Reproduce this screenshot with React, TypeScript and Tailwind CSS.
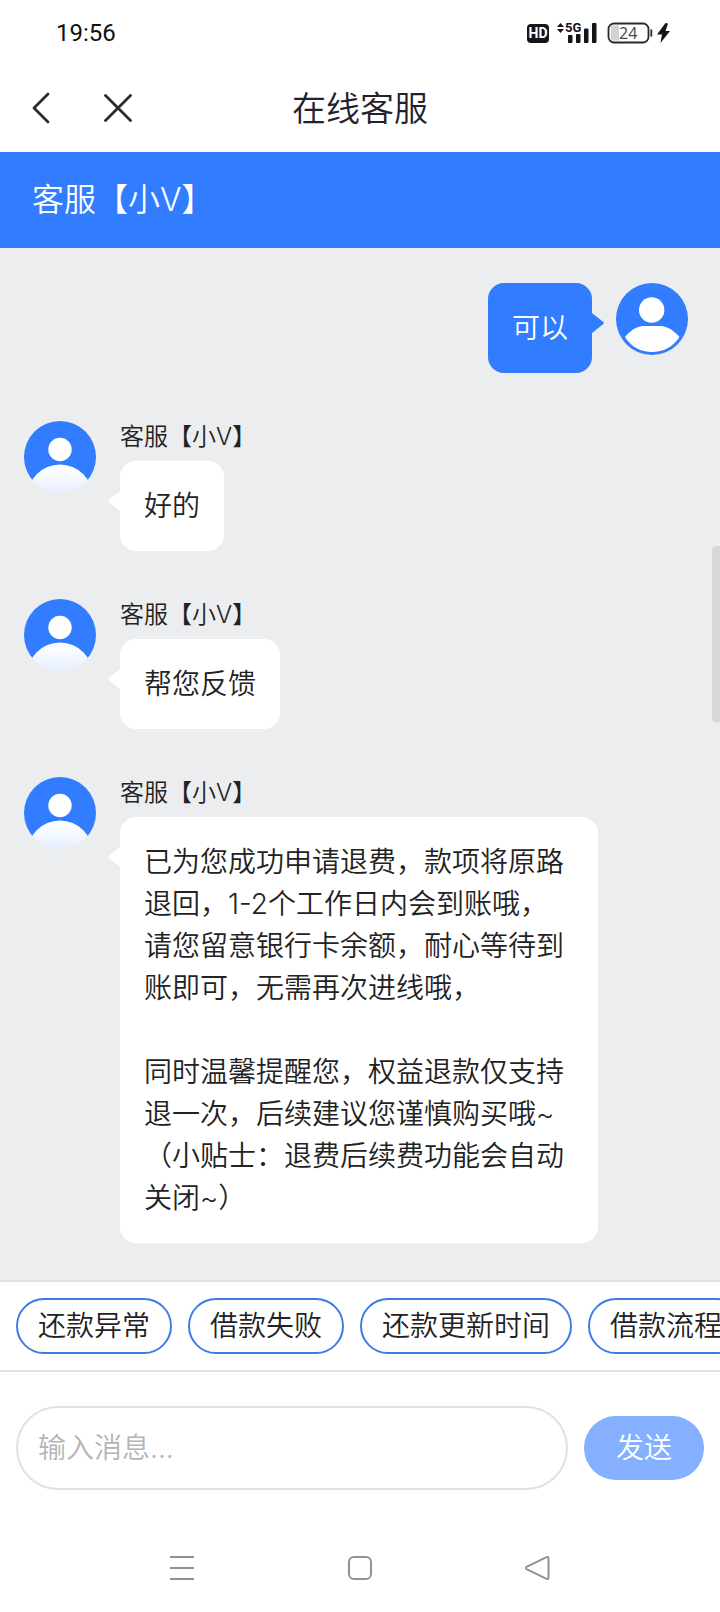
import { useState, type ReactNode } from 'react';

const AGENT = '客服【小V】';

const messages = [
  { id: 1, from: 'user', text: '可以' },
  { id: 2, from: 'agent', text: '好的' },
  { id: 3, from: 'agent', text: '帮您反馈' },
  {
    id: 4,
    from: 'agent',
    text:
      '已为您成功申请退费，款项将原路退回，1-2个工作日内会到账哦，\n请您留意银行卡余额，耐心等待到账即可，无需再次进线哦，\n\n' +
      '同时温馨提醒您，权益退款仅支持退一次，后续建议您谨慎购买哦~\n（小贴士：退费后续费功能会自动关闭~）',
  },
];

const quickReplies = ['还款异常', '借款失败', '还款更新时间', '借款流程'];

export default function App() {
  const [draft, setDraft] = useState('');

  return (
    <div className="flex min-h-screen flex-col overflow-x-hidden bg-white font-[Inter,'Noto_Sans_CJK_SC',sans-serif] [font-weight:350] text-[#222]">
      <StatusBar />

      {/* 标题栏 */}
      <header className="grid h-22 grid-cols-3 items-center px-8">
        <div className="flex items-center gap-[54px]">
          <button type="button" aria-label="返回">
            <svg width="18" height="32" viewBox="0 0 18 32" fill="none" stroke="#2b2b2e" strokeWidth="2.8" strokeLinecap="round" strokeLinejoin="round">
              <path d="M16 2 2 16l14 14" />
            </svg>
          </button>
          <button type="button" aria-label="关闭">
            <svg width="28" height="28" viewBox="0 0 28 28" fill="none" stroke="#2b2b2e" strokeWidth="2.8" strokeLinecap="round">
              <path d="M1.5 1.5l25 25M26.5 1.5l-25 25" />
            </svg>
          </button>
        </div>
        <h1 className="pt-0.5 text-center text-[34px] leading-12 text-[#23222c]">在线客服</h1>
      </header>

      <div className="bg-[#327dff] px-8 py-6 text-[32px] leading-12 text-white">{AGENT}</div>

      {/* 聊天记录 */}
      <main className="relative flex flex-1 flex-col gap-12 bg-[#ebedef] pt-[35px] pr-8 pb-[37px] pl-6">
        {messages.map((m) =>
          m.from === 'user' ? (
            <div key={m.id} className="flex items-start justify-end gap-6">
              <Bubble side="right">{m.text}</Bubble>
              <UserAvatar />
            </div>
          ) : (
            <div key={m.id} className="flex items-start gap-6">
              <AgentAvatar />
              <div className="flex flex-col items-start gap-2">
                <p className="text-2xl leading-8">{AGENT}</p>
                <Bubble side="left">{m.text}</Bubble>
              </div>
            </div>
          ),
        )}
        <div className="absolute top-[298px] right-0 h-44 w-2 rounded-l bg-[#d5d7d9]" />
      </main>

      {/* 快捷问题 */}
      <div className="flex gap-4 overflow-hidden border-y-2 border-[#e2e3e4] px-4 py-4">
        {quickReplies.map((q) => (
          <button
            key={q}
            type="button"
            onClick={() => setDraft(q)}
            className="h-14 shrink-0 rounded-full border-2 border-[#3b7de8] px-5 text-[28px] leading-10 whitespace-nowrap"
          >
            {q}
          </button>
        ))}
      </div>

      {/* 输入区 */}
      <form className="flex items-center gap-4 px-4 py-[34px]" onSubmit={(e) => e.preventDefault()}>
        <input
          type="text"
          aria-label="输入消息"
          placeholder="输入消息..."
          value={draft}
          onChange={(e) => setDraft(e.target.value)}
          className="h-[84px] min-w-0 flex-1 rounded-full border-2 border-[#e2e2e2] px-5 text-[28px] outline-none placeholder:text-[#b4b4b4]"
        />
        <button type="submit" className="h-16 w-30 rounded-full bg-[#84b0ff] text-[28px] leading-10 text-white">
          发送
        </button>
      </form>

      {/* 系统导航键 */}
      <nav className="flex h-22 items-center justify-center gap-[152px]">
        <button type="button" aria-label="最近任务">
          <svg width="26" height="26" viewBox="0 0 26 26" stroke="#929292" strokeWidth="2">
            <path d="M1 2h24M1 13h24M1 24h24" />
          </svg>
        </button>
        <button type="button" aria-label="主屏幕">
          <svg width="26" height="26" viewBox="0 0 26 26" fill="none" stroke="#929292" strokeWidth="2">
            <rect x="2" y="2" width="22" height="22" rx="5" />
          </svg>
        </button>
        <button type="button" aria-label="后退">
          <svg width="26" height="26" viewBox="0 0 26 26" fill="none" stroke="#929292" strokeWidth="2" strokeLinejoin="round">
            <path d="M2 11.6 21.6 2.2q1.9-.7 1.9 1.3v19q0 2-1.9 1.3L2 14.4q-2-1.4 0-2.8Z" />
          </svg>
        </button>
      </nav>
    </div>
  );
}

function StatusBar() {
  return (
    <div className="flex h-16 items-center justify-between pt-0.5 pr-12 pl-14">
      <span className="font-[Roboto,sans-serif] text-2xl leading-8 font-normal text-[#111]">19:56</span>
      <div className="flex items-center gap-2 pr-0.5">
        <span className="flex h-[19px] w-[22px] items-center justify-center rounded-sm bg-[#151515] font-[Roboto,sans-serif] text-sm leading-4 font-bold text-white">
          HD
        </span>
        <div className="relative pr-0.5">
          <svg width="40" height="22" viewBox="0 0 40 22" fill="#151515">
            <path d="M0 5 3.5 1 7 5zM0 7l3.5 4L7 7z" />
            <rect x="11" y="13" width="4.5" height="8" rx="1" />
            <rect x="19" y="12" width="4.5" height="9" rx="1" />
            <rect x="27" y="6.5" width="4.5" height="14.5" rx="1" />
            <rect x="35" y="1" width="4.5" height="20" rx="1" />
          </svg>
          <span className="absolute top-0 left-2 font-[Roboto,sans-serif] text-[13px] leading-3 font-bold text-[#151515]">5G</span>
        </div>
        <div className="flex items-center gap-1">
          <div className="relative flex items-center">
            <svg width="46" height="22" viewBox="0 0 46 22" fill="none">
              <rect x="4" y="3.5" width="8" height="15" fill="#d3d3d3" />
              <rect x="1.5" y="1.5" width="40" height="19" rx="5.5" stroke="#2a2a2a" strokeWidth="1.8" />
              <path d="M44.3 7.5v7" stroke="#2a2a2a" strokeWidth="1.8" />
            </svg>
            <span className="absolute inset-y-0 left-3 font-['Open_Sans',sans-serif] text-base leading-[22px] font-normal text-[#444]">24</span>
          </div>
          <svg width="13" height="20" viewBox="0 0 13 20" fill="#151515">
            <path d="M8.5 0 0 11.5h5L3.5 20 13 8H8.5L11 .5z" />
          </svg>
        </div>
      </div>
    </div>
  );
}

function Bubble({ side, children }: { side: 'left' | 'right'; children: ReactNode }) {
  const right = side === 'right';
  return (
    <div
      className={`relative max-w-[478px] rounded-2xl p-6 text-[28px] leading-[42px] whitespace-pre-line ${
        right ? 'bg-[#327dff] text-white' : 'bg-white'
      }`}
    >
      {children}
      <svg
        width="12"
        height="20"
        viewBox="0 0 12 20"
        className={`absolute top-[30px] ${right ? 'left-full text-[#327dff]' : 'right-full rotate-180 text-white'}`}
      >
        <path d="M0 0l11.3 9q1 1 0 2L0 20z" fill="currentColor" />
      </svg>
    </div>
  );
}

function UserAvatar() {
  return (
    <svg width="72" height="72" viewBox="0 0 72 72" className="shrink-0">
      <circle cx="36" cy="36" r="36" fill="#327dff" />
      <circle cx="35.7" cy="27" r="12.7" fill="#fff" />
      <path d="M9 54C14 48 20 43 28 43h16c8 0 14 5 19.5 11C57 64 47 69 36 69S15 64 9 54Z" fill="#fff" />
    </svg>
  );
}

function AgentAvatar() {
  return (
    <svg width="72" height="72" viewBox="0 0 72 72" className="shrink-0">
      <defs>
        <linearGradient id="shoulder" x1="0" y1="43" x2="0" y2="72" gradientUnits="userSpaceOnUse">
          <stop offset="0" stopColor="#fff" />
          <stop offset="0.4" stopColor="#f7faff" />
          <stop offset="1" stopColor="#e6eeff" />
        </linearGradient>
        <clipPath id="face">
          <circle cx="36" cy="36" r="36" />
        </clipPath>
      </defs>
      <g clipPath="url(#face)">
        <path d="M0 0h72v59H0z" fill="#327dff" />
        <circle cx="36" cy="28.5" r="11.7" fill="#fff" />
        <circle cx="36" cy="76.5" r="33" fill="url(#shoulder)" />
      </g>
    </svg>
  );
}
